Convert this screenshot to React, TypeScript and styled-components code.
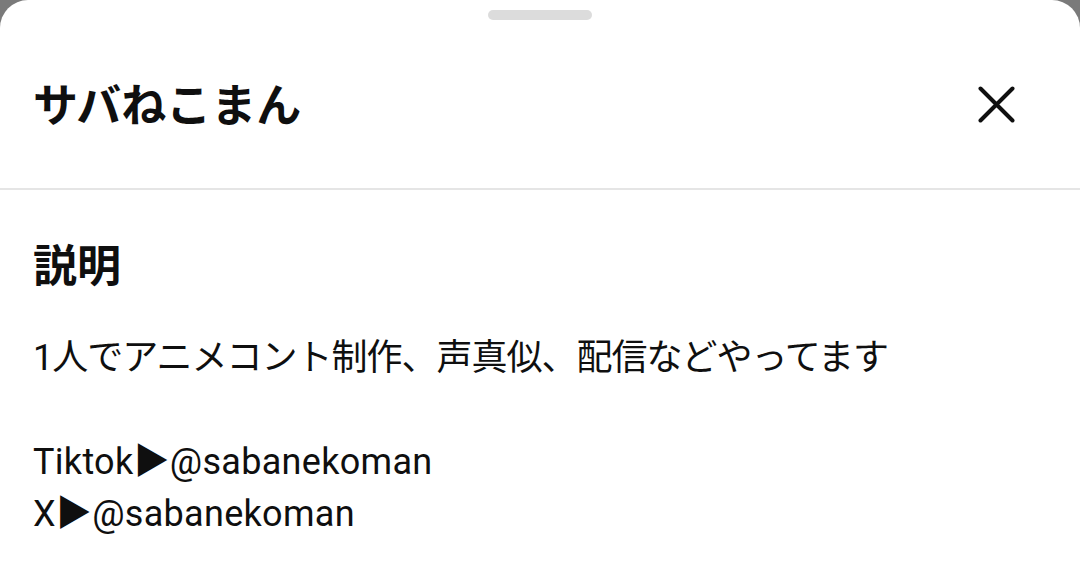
import styled, { createGlobalStyle } from 'styled-components';

const GlobalStyle = createGlobalStyle`
    html, body {
        margin: 0;
        padding: 0;
        background: #7a7a7a;
    }
    body {
        font-family: Roboto, "Noto Sans CJK JP", sans-serif;
        color: #0f0f0f;
    }
`;

const Sheet = styled.div`
    background: #ffffff;
    border-radius: 28px 28px 0 0;
    min-height: 567px;
    overflow: hidden;
`;

const Handle = styled.div`
    width: 104px;
    height: 10px;
    border-radius: 5px;
    background: #dcdcdc;
    margin: 10px auto 0;
`;

const Header = styled.header`
    height: 168px;
    display: flex;
    align-items: center;
    justify-content: space-between;
    padding: 0 65px 0 33px;
    border-bottom: 2px solid #e5e5e5;
`;

const Title = styled.h1`
    margin: 6px 0 0;
    font-size: 45px;
    font-weight: 700;
    line-height: 1.2;
`;

const CloseButton = styled.button`
    border: none;
    background: none;
    padding: 0;
    width: 37px;
    height: 37px;
    display: flex;
    color: #0f0f0f;
    cursor: pointer;
`;

const Content = styled.section`
    padding: 51px 33px 0;
`;

const SectionTitle = styled.h2`
    margin: 0 0 38px;
    font-size: 44px;
    font-weight: 700;
    line-height: 53px;
`;

const Line = styled.p<{ $spacing: string }>`
    margin: 0;
    font-size: 36px;
    line-height: 52px;
    min-height: 52px;
    letter-spacing: ${({ $spacing }) => $spacing};
`;

const lines = [
    { text: '1人でアニメコント制作、声真似、配信などやってます', spacing: '-1px' },
    { text: '', spacing: 'normal' },
    { text: 'Tiktok▶@sabanekoman', spacing: '0.3px' },
    { text: 'X▶@sabanekoman', spacing: '0.3px' },
];

export default function App() {
    return (
        <>
            <GlobalStyle />
            <Sheet>
                <Handle />
                <Header>
                    <Title>サバねこまん</Title>
                    <CloseButton aria-label="閉じる">
                        <svg width="37" height="37" viewBox="0 0 37 37">
                            <path
                                d="M2.5 2.5 L34.5 34.5 M34.5 2.5 L2.5 34.5"
                                stroke="currentColor"
                                strokeWidth="4"
                                strokeLinecap="round"
                            />
                        </svg>
                    </CloseButton>
                </Header>
                <Content>
                    <SectionTitle>説明</SectionTitle>
                    {lines.map((line, i) => (
                        <Line key={i} $spacing={line.spacing}>
                            {line.text}
                        </Line>
                    ))}
                </Content>
            </Sheet>
        </>
    );
}
